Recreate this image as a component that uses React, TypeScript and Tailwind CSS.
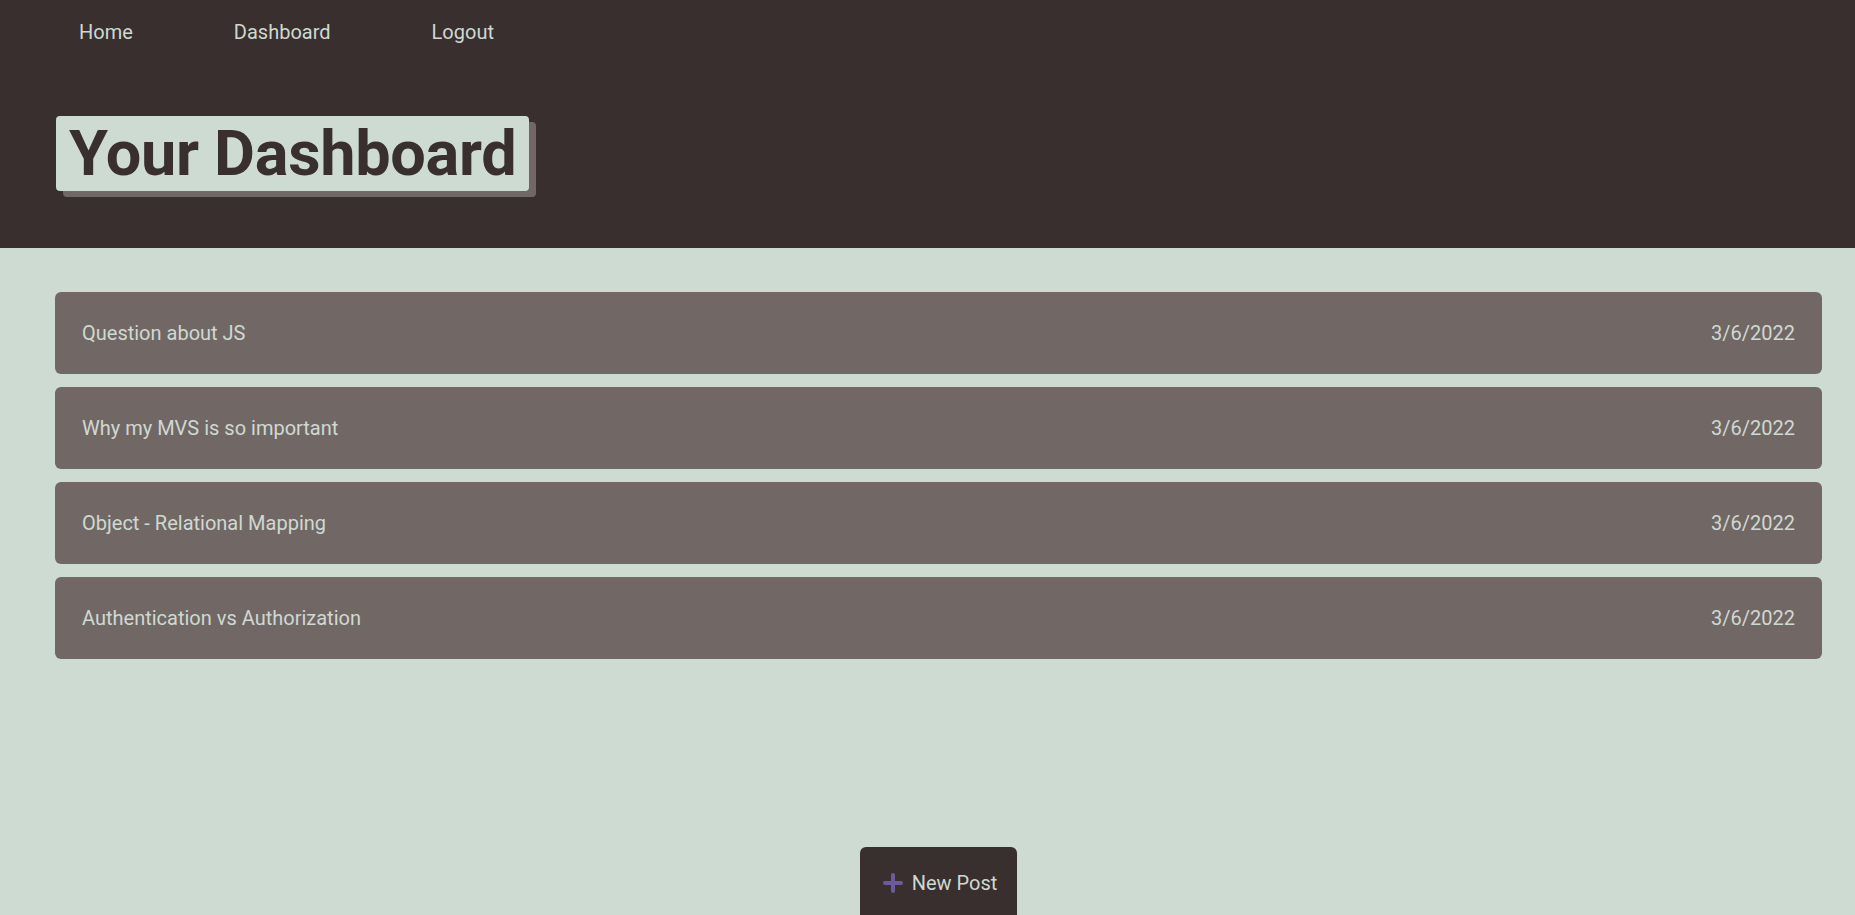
const posts = [
  { title: 'Question about JS', date: '3/6/2022' },
  { title: 'Why my MVS is so important', date: '3/6/2022' },
  { title: 'Object - Relational Mapping', date: '3/6/2022' },
  { title: 'Authentication vs Authorization', date: '3/6/2022' },
];

export default function App() {
  return (
    <div className="min-h-screen bg-[#cddbd3] font-['Roboto',sans-serif]">
      {/* Header */}
      <header className="h-[248px] bg-[#382f2e] pt-[17px]">
        <nav className="flex gap-[101px] pl-[79px] text-[20px] text-[#cfd9d1]">
          <a href="#">Home</a>
          <a href="#">Dashboard</a>
          <a href="#">Logout</a>
        </nav>
        <div className="pl-[56px] pt-[69px]">
          <h1 className="inline-block rounded-[4px] bg-[#cddbd3] px-[13px] text-[63px] font-bold leading-[75px] tracking-[-0.3px] text-[#382f2e] shadow-[7px_6px_0_#716866]">
            Your Dashboard
          </h1>
        </div>
      </header>

      {/* Posts */}
      <main className="pl-[55px] pr-[33px] pt-[44px]">
        <div className="flex flex-col gap-[13px]">
          {posts.map((post) => (
            <div
              key={post.title}
              className="flex h-[82px] items-center justify-between rounded-[6px] bg-[#716866] px-[27px] text-[20px] text-[#cfd9d1]"
            >
              <span>{post.title}</span>
              <span>{post.date}</span>
            </div>
          ))}
        </div>

        <div className="mt-[188px] flex justify-center">
          <button className="flex h-[72px] items-center gap-[9px] rounded-t-[6px] bg-[#382f2e] pl-[23px] pr-[20px] pb-[1px] text-[20px] text-[#cfd9d1]">
            <svg width="20" height="20" viewBox="0 0 20 20" fill="none">
              <path d="M10 2v16M2 10h16" stroke="#6b5b9e" strokeWidth="4" strokeLinecap="round" />
            </svg>
            New Post
          </button>
        </div>
      </main>
    </div>
  );
}
